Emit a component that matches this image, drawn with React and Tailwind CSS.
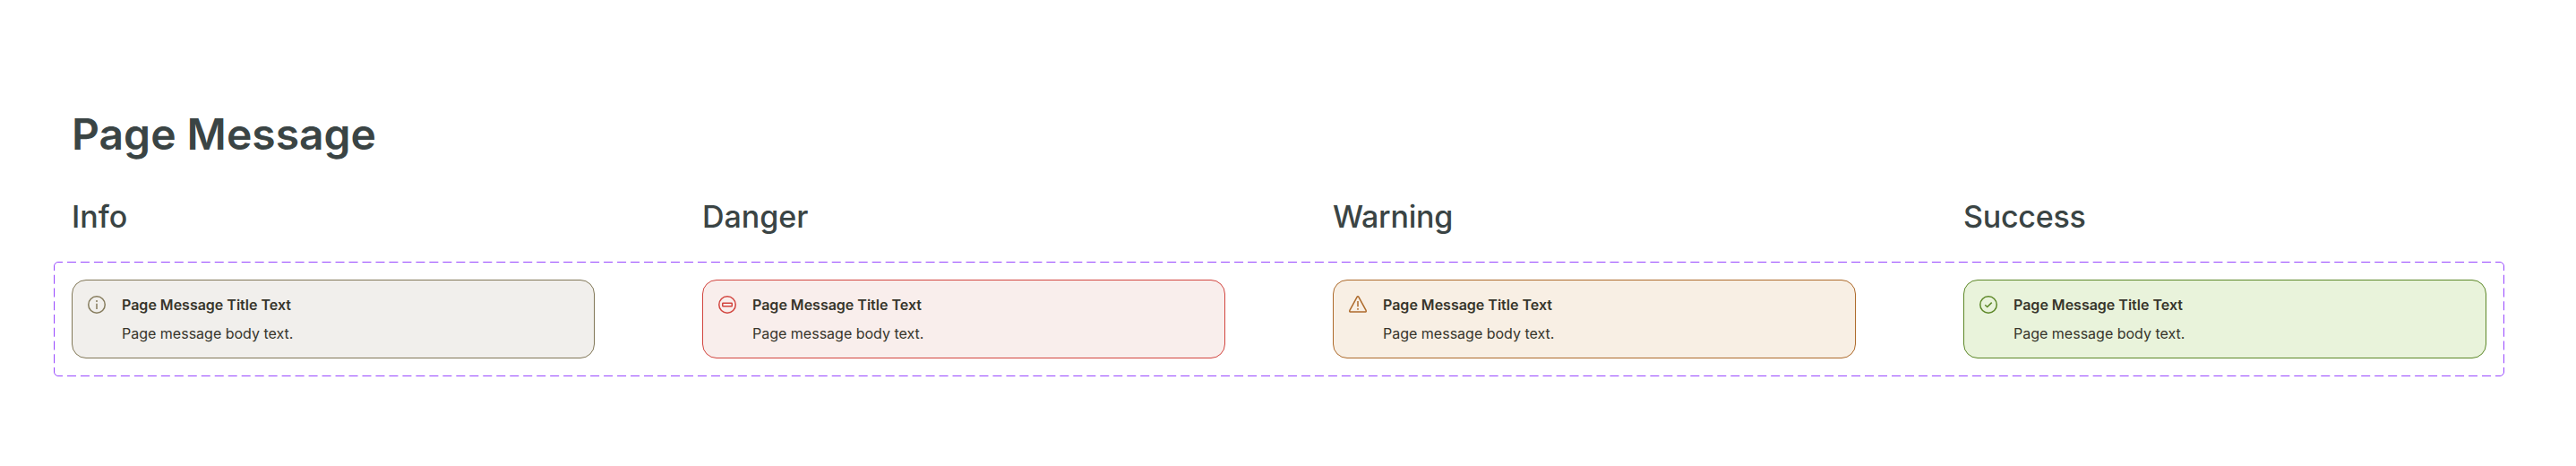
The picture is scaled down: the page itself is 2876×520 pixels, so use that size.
const messages = [
  { heading: "Info", tracking: "tracking-normal", card: "bg-[#f1efec] border-[#817757]", icon: "text-[#857b5c]", Icon: InfoIcon },
  { heading: "Danger", tracking: "tracking-normal", card: "bg-[#f9eeec] border-[#d2453f]", icon: "text-[#d2453f]", Icon: DangerIcon },
  { heading: "Warning", tracking: "tracking-[-0.25px]", card: "bg-[#f8efe4] border-[#ad6a2b]", icon: "text-[#ad6a2b]", Icon: WarningIcon },
  { heading: "Success", tracking: "tracking-[-0.25px]", card: "bg-[#e9f3db] border-[#5c8727]", icon: "text-[#5c8727]", Icon: SuccessIcon },
];

function IconBase({ children }) {
  return (
    <svg className="size-6 shrink-0" viewBox="0 0 24 24" fill="none" stroke="currentColor" strokeWidth="1.5">
      {children}
    </svg>
  );
}

function InfoIcon() {
  return (
    <IconBase>
      <circle cx="12" cy="12" r="9.25" />
      <path d="M12 10.7V17M12 7v2" />
    </IconBase>
  );
}

function DangerIcon() {
  return (
    <IconBase>
      <circle cx="12" cy="12" r="9.25" />
      <rect x="6.75" y="10.25" width="10.5" height="3.5" rx="0.5" />
    </IconBase>
  );
}

function WarningIcon() {
  return (
    <IconBase>
      <path strokeLinejoin="round" d="M11.1 3.3 2.9 18.4a1.1 1.1 0 0 0 1 1.7h16.2a1.1 1.1 0 0 0 1-1.7L12.9 3.3a1.03 1.03 0 0 0-1.8 0Z" />
      <path d="M12 8v6.2M12 15.9v1.9" />
    </IconBase>
  );
}

function SuccessIcon() {
  return (
    <IconBase>
      <circle cx="12" cy="12" r="9.25" />
      <path d="m8.2 12.3 2.5 2.2 5-4.9" />
    </IconBase>
  );
}

function DashedOutline() {
  return (
    <svg className="pointer-events-none absolute inset-0 size-full" fill="none" stroke="#9747ff">
      <path d="M0.5 10V5A4.5 4.5 0 0 1 5 0.5H10M2726 0.5H2731A4.5 4.5 0 0 1 2735.5 5V10M2735.5 118V123A4.5 4.5 0 0 1 2731 127.5H2726M10 127.5H5A4.5 4.5 0 0 1 0.5 123V118" />
      <path strokeDasharray="10 4.978" d="M14.978 0.5H2721.1M14.978 127.5H2721.1" />
      <path strokeDasharray="10 4.75" d="M0.5 14.75V113.3M2735.5 14.75V113.3" />
    </svg>
  );
}

export default function App() {
  return (
    <main className="h-[520px] w-[2876px] bg-white pt-[121px] pr-20 pl-[60px] font-['Inter',sans-serif] text-[#3a4444]">
      <h1 className="h-[58px] pl-5 text-[48px] leading-[58px] font-semibold">Page Message</h1>
      <div className="mt-[41px] grid h-11 grid-cols-4 gap-[120px] px-5">
        {messages.map((m) => (
          <h2 key={m.heading} className={`text-[34px] leading-[44px] font-medium ${m.tracking}`}>{m.heading}</h2>
        ))}
      </div>
      <section className="relative mt-7 grid h-32 grid-cols-4 gap-[120px] p-5">
        <DashedOutline />
        {messages.map(({ heading, card, icon, Icon }) => (
          <article key={heading} className={`flex h-[88px] gap-4 rounded-2xl border p-[15px] ${card}`}>
            <span className={icon}><Icon /></span>
            <div className="flex flex-col gap-2 text-base leading-6 text-[#37352b]">
              <h3 className="font-semibold">Page Message Title Text</h3>
              <p>Page message body text.</p>
            </div>
          </article>
        ))}
      </section>
    </main>
  );
}
